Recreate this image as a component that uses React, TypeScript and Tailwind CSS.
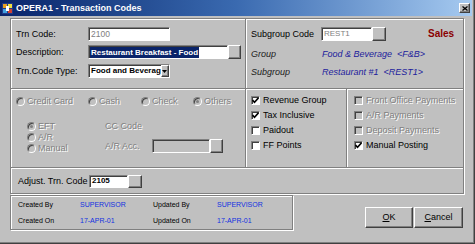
import type { ReactNode } from "react";

const dis = "text-[#808080] [text-shadow:1px_1px_0_#fff]";

function Sunken({ className = "", children }: { className?: string; children?: ReactNode }) {
  return (
    <div
      className={`border border-t-[#808080] border-l-[#808080] border-b-white border-r-white shadow-[inset_1px_1px_0_#404040] ${className}`}
    >
      {children}
    </div>
  );
}

function Raised({ className = "", children }: { className?: string; children?: ReactNode }) {
  return (
    <div
      className={`border border-t-white border-l-white border-b-[#404040] border-r-[#404040] shadow-[inset_-1px_-1px_0_#808080] bg-[#c0c0c0] flex items-center justify-center ${className}`}
    >
      {children}
    </div>
  );
}

function Tick() {
  return (
    <svg width="7" height="7" viewBox="0 0 7 7">
      <path d="M0.5 3 L2.5 5.2 L6.5 0.8" fill="none" stroke="#000" strokeWidth="1.6" />
    </svg>
  );
}

function Check({ label, checked = false, disabled = false }: { label: string; checked?: boolean; disabled?: boolean }) {
  return (
    <div className="flex items-center h-[15px]">
      <Sunken className={`w-[9px] h-[9px] flex items-center justify-center ${disabled ? "bg-[#c0c0c0]" : "bg-white"}`}>
        {checked && <Tick />}
      </Sunken>
      <span className={`ml-[3px] leading-none ${disabled ? dis : "text-black"}`}>{label}</span>
    </div>
  );
}

function Radio({ label, on = false, className = "" }: { label: string; on?: boolean; className?: string }) {
  return (
    <div className={`flex items-center ${className}`}>
      <div className="w-[9px] h-[9px] rounded-full border border-t-[#808080] border-l-[#808080] border-b-white border-r-white bg-[#c0c0c0] shadow-[inset_1px_1px_0_#404040] flex items-center justify-center">
        {on && <div className="w-[3px] h-[3px] rounded-full bg-[#808080]" />}
      </div>
      <span className={`ml-[2px] leading-none ${dis}`}>{label}</span>
    </div>
  );
}

function AppIcon() {
  return (
    <svg width="11" height="11" viewBox="0 0 11 11">
      <rect x="0" y="0" width="11" height="11" fill="#203a8a" />
      <rect x="1" y="1" width="4" height="4" fill="#e8a020" />
      <rect x="6" y="1" width="4" height="4" fill="#f0e040" />
      <rect x="1" y="6" width="4" height="4" fill="#40a0e0" />
      <rect x="6" y="6" width="4" height="4" fill="#d04030" />
      <rect x="4" y="3" width="3" height="5" fill="#fff" />
    </svg>
  );
}

export default function App() {
  return (
    <div className="w-[475px] h-[244px] bg-[#c0c0c0] font-['Liberation_Sans',Arial,sans-serif] text-[9px] text-black shadow-[inset_-1px_-1px_0_#404040,inset_-2px_-2px_0_#808080] overflow-hidden">
      {/* title bar */}
      <div className="w-[472px] h-[16px] bg-linear-to-r from-[#0a246a] via-[#3a6ab0] to-[#a6caf0] flex items-center pl-[2px]">
        <AppIcon />
        <span className="ml-[3px] text-white font-bold text-[9px] leading-none">OPERA1 - Transaction Codes</span>
        <Raised className="ml-auto mr-[2px] w-[11px] h-[10px]">
          <svg width="6" height="5" viewBox="0 0 6 5">
            <path d="M0.5 0.5 L5.5 4.5 M5.5 0.5 L0.5 4.5" stroke="#000" strokeWidth="1.3" />
          </svg>
        </Raised>
      </div>

      <div className="pl-[10px] pt-[2px]">
        {/* main frame */}
        <div className="w-[454px] border border-[#808080] shadow-[inset_1px_1px_0_#fff,1px_1px_0_#fff]">
          {/* row 1 */}
          <div className="flex h-[70px] border-b border-[#808080] shadow-[0_1px_0_#fff]">
            <div className="w-[235px] border-r border-[#808080] shadow-[1px_0_0_#fff] pl-[5px] pt-[8px]">
              <div className="flex items-center h-[14px]">
                <span className="w-[72px] leading-none">Trn Code:</span>
                <Sunken className="w-[82px] h-[14px] bg-white flex items-center pl-[2px]">
                  <span className="text-[#808080] text-[8.5px] leading-none">2100</span>
                </Sunken>
              </div>
              <div className="flex items-center h-[14px] mt-[4px]">
                <span className="w-[72px] leading-none">Description:</span>
                <Sunken className="w-[140px] h-[14px] bg-white flex items-center pl-[1px]">
                  <span className="bg-[#0a246a] text-white font-bold text-[8px] leading-[11px] px-[1px]">Restaurant Breakfast - Food</span>
                </Sunken>
                <Raised className="w-[13px] h-[14px]" />
              </div>
              <div className="flex items-center h-[14px] mt-[5px]">
                <span className="w-[72px] leading-none">Trn.Code Type:</span>
                <Sunken className="w-[82px] h-[14px] bg-white flex items-center pl-[2px]">
                  <span className="font-bold text-[8px] leading-none whitespace-nowrap">Food and Beverag</span>
                  <Raised className="ml-auto w-[11px] h-[12px]">
                    <svg width="5" height="3" viewBox="0 0 5 3">
                      <path d="M0 0 H5 L2.5 3 Z" fill="#000" />
                    </svg>
                  </Raised>
                </Sunken>
              </div>
            </div>
            <div className="flex-1 pl-[5px] pt-[8px]">
              <div className="flex items-center h-[14px]">
                <span className="w-[70px] leading-none">Subgroup Code</span>
                <Sunken className="w-[51px] h-[14px] bg-white flex items-center pl-[2px]">
                  <span className="text-[#808080] text-[8px] leading-none">REST1</span>
                </Sunken>
                <Raised className="w-[14px] h-[14px]" />
                <span className="ml-[42px] font-bold text-[10px] text-[#8b0000] leading-none">Sales</span>
              </div>
              <div className="flex items-center h-[14px] mt-[6px] italic">
                <span className="w-[71px] leading-none text-[#202020]">Group</span>
                <span className="text-[#1c1c9c] leading-none whitespace-pre">Food &amp; Beverage  &lt;F&amp;B&gt;</span>
              </div>
              <div className="flex items-center h-[14px] mt-[4px] italic">
                <span className="w-[71px] leading-none text-[#202020]">Subgroup</span>
                <span className="text-[#1c1c9c] leading-none whitespace-pre">Restaurant #1  &lt;REST1&gt;</span>
              </div>
            </div>
          </div>

          {/* row 2 */}
          <div className="flex h-[79px] border-b border-[#808080] shadow-[0_1px_0_#fff]">
            <div className="w-[235px] border-r border-[#808080] shadow-[1px_0_0_#fff] pl-[5px] pt-[6px]">
              <div className="flex h-[12px]">
                <Radio label="Credit Card" className="w-[72px]" />
                <Radio label="Cash" className="w-[53px]" />
                <Radio label="Check" className="w-[52px]" />
                <Radio label="Others" on />
              </div>
              <div className="flex mt-[14px] pl-[11px]">
                <div className="w-[78px] flex flex-col">
                  <Radio label="EFT" on className="h-[11px]" />
                  <Radio label="A/R" className="h-[11px]" />
                  <Radio label="Manual" className="h-[11px]" />
                </div>
                <div className="flex flex-col">
                  <div className={`h-[11px] flex items-center leading-none ${dis}`}>CC Code</div>
                  <div className="flex items-center h-[14px] mt-[7px]">
                    <span className={`w-[47px] leading-none ${dis}`}>A/R Acc.</span>
                    <Sunken className="w-[58px] h-[14px] bg-[#c0c0c0]" />
                    <Raised className="w-[13px] h-[14px]" />
                  </div>
                </div>
              </div>
            </div>
            <div className="w-[101px] border-r border-[#808080] shadow-[1px_0_0_#fff] pl-[5px] pt-[4px]">
              <Check label="Revenue Group" checked />
              <Check label="Tax Inclusive" checked />
              <Check label="Paidout" />
              <Check label="FF Points" />
            </div>
            <div className="flex-1 pl-[7px] pt-[4px]">
              <Check label="Front Office Payments" disabled />
              <Check label="A/R Payments" disabled />
              <Check label="Deposit Payments" disabled />
              <Check label="Manual Posting" checked />
            </div>
          </div>

          {/* row 3 */}
          <div className="h-[25px] flex items-center pl-[7px] pt-[1px]">
            <span className="w-[71px] leading-none">Adjust. Trn. Code</span>
            <Sunken className="w-[39px] h-[13px] bg-white flex items-center pl-[2px]">
              <span className="font-bold text-[8px] leading-none">2105</span>
            </Sunken>
            <Raised className="w-[14px] h-[13px]" />
          </div>
        </div>

        {/* bottom */}
        <div className="flex mt-[1px]">
          <div className="w-[283px] h-[35px] border border-[#808080] shadow-[inset_1px_1px_0_#fff,1px_1px_0_#fff] text-[7px] pl-[7px] flex flex-col justify-center gap-[9px]">
            <div className="flex leading-none">
              <span className="w-[62px]">Created By</span>
              <span className="w-[73px] text-[#1030e0]">SUPERVISOR</span>
              <span className="w-[64px]">Updated By</span>
              <span className="text-[#1030e0]">SUPERVISOR</span>
            </div>
            <div className="flex leading-none">
              <span className="w-[62px]">Created On</span>
              <span className="w-[73px] text-[#1030e0]">17-APR-01</span>
              <span className="w-[64px]">Updated On</span>
              <span className="text-[#1030e0]">17-APR-01</span>
            </div>
          </div>
          <div className="flex ml-[72px] mt-[12px]">
            <Raised className="w-[48px] h-[21px]">
              <span className="leading-none"><span className="underline">O</span>K</span>
            </Raised>
            <Raised className="w-[49px] h-[21px] ml-[1px]">
              <span className="leading-none"><span className="underline">C</span>ancel</span>
            </Raised>
          </div>
        </div>
      </div>
    </div>
  );
}
